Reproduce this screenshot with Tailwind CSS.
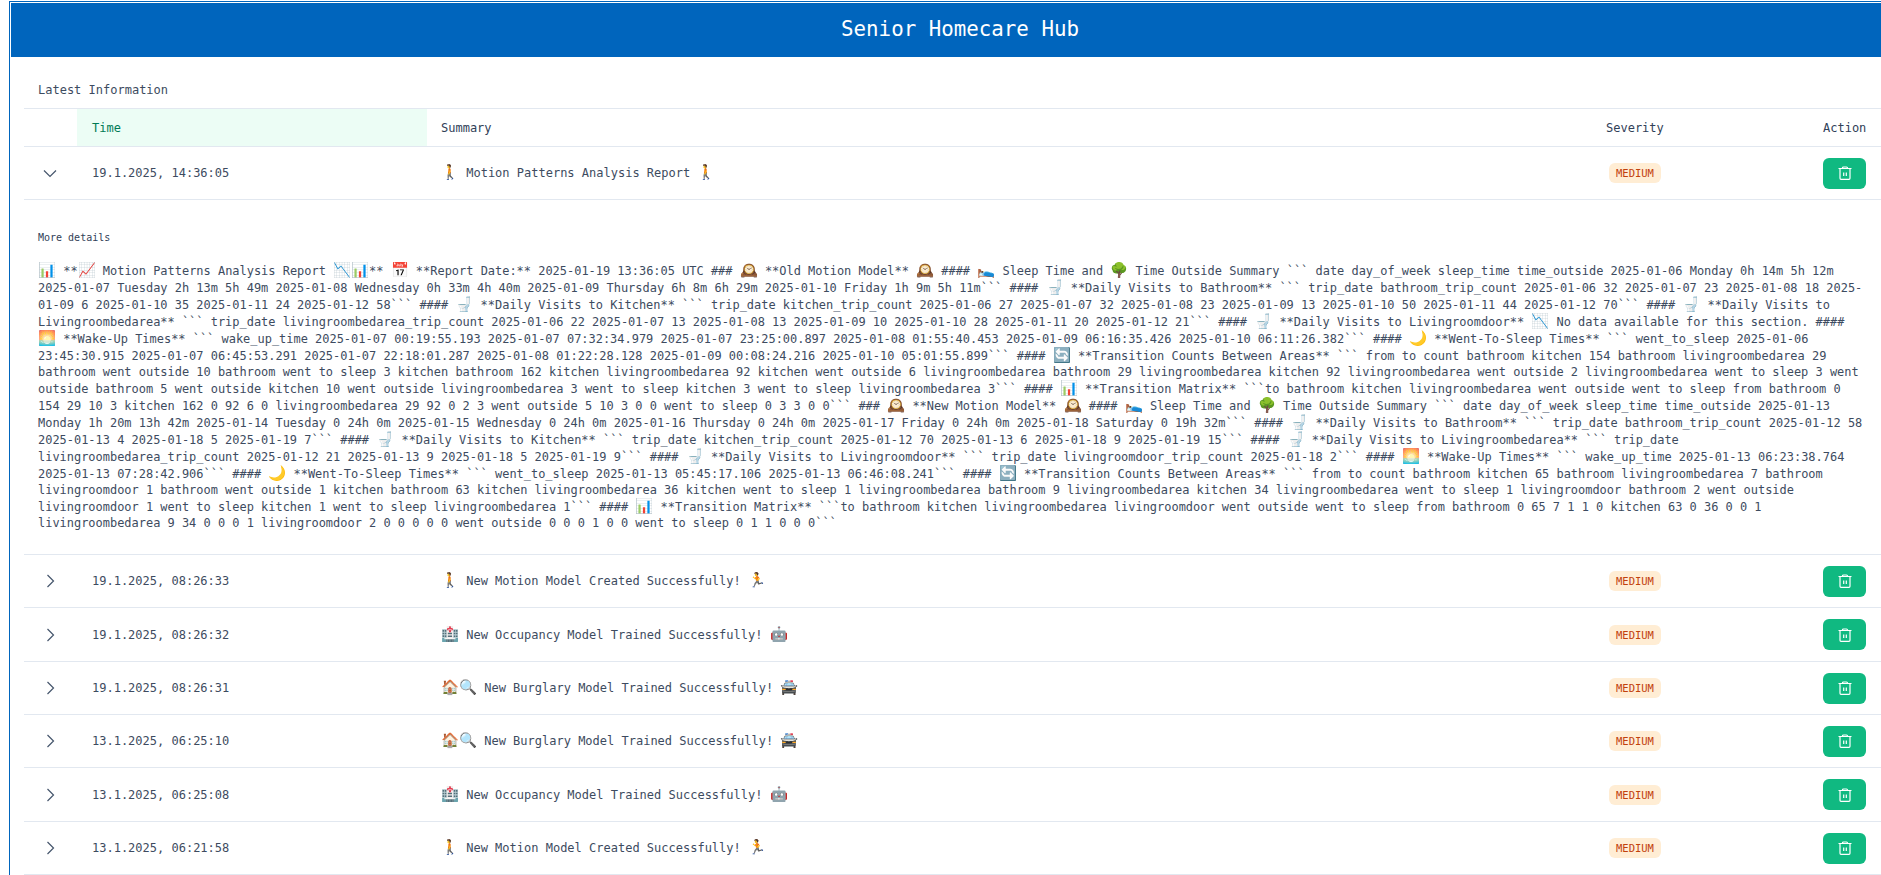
<!DOCTYPE html>
<html lang="en">
<head>
    <meta charset="UTF-8" />
    <meta name="viewport" content="width=device-width, initial-scale=1.0" />
    <title>Senior Homecare Hub</title>
    <script src="https://cdn.jsdelivr.net/npm/@tailwindcss/browser@4"></script>
</head>
<body class="bg-white text-[#3d4b60] font-['DejaVu_Sans_Mono',monospace] text-xs h-[875px] overflow-hidden">

<div class="ml-[9px] mt-px h-full border-l border-t border-[#0065bd] pt-px pl-px">

    <!-- Header -->
    <header class="h-[54px] bg-[#0065bd] text-white flex items-center justify-center pl-[28px] text-[20.8px]">
        Senior Homecare Hub
    </header>

    <main class="pl-[13px]">
        <h2 class="h-[51px] pl-[14px] pt-[25px] leading-4">Latest Information</h2>

        <table class="w-full table-fixed border-t border-slate-200">
            <thead>
                <tr class="h-[38px] border-b border-slate-200 text-left text-slate-700">
                    <th class="w-[53px]"></th>
                    <th class="w-[350px] px-[15px] font-medium bg-emerald-50 text-emerald-700">Time</th>
                    <th class="px-[14px] font-medium">Summary</th>
                    <th class="w-[217px] px-3 font-medium">Severity</th>
                    <th class="w-[70px] px-3 font-medium">Action</th>
                </tr>
            </thead>
            <tbody>
                <!-- Expanded row -->
                <tr class="h-[53px] border-b border-slate-200">
                    <td class="pl-[18px]">
                        <svg class="w-4 h-4 text-slate-600" fill="none" viewBox="0 0 16 16" stroke="currentColor" stroke-width="1.2"><path d="M2 5.5l6 6 6-6" /></svg>
                    </td>
                    <td class="px-[15px]">19.1.2025, 14:36:05</td>
                    <td class="px-[14px]"><span class="text-[14.5px]">🚶</span> Motion Patterns Analysis Report <span class="text-[14.5px]">🚶</span></td>
                    <td class="px-3"><span class="inline-block ml-[3px] h-5 px-[7px] rounded-md bg-orange-100 text-[#c2410c] text-[10.5px] leading-5">MEDIUM</span></td>
                    <td class="px-3">
                        <button class="w-[43px] h-[31px] rounded-md bg-[#10b981] text-white flex items-center justify-center">
                            <svg class="w-4 h-4" fill="none" viewBox="0 0 16 16" stroke="currentColor" stroke-width="1.2"><path d="M1.5 3.5h13M5.5 3.5V3a1 1 0 0 1 1-1h3a1 1 0 0 1 1 1v.5M3 3.5v9.8a1 1 0 0 0 1 1h8a1 1 0 0 0 1-1V3.5M6.7 7.5v3.5M9.3 7.5v3.5" /></svg>
                        </button>
                    </td>
                </tr>
                <tr class="border-b border-slate-200">
                    <td colspan="5" class="pl-[14px] pr-[14px] pt-[31px] h-[355px] align-top">
                        <p class="text-[10px] leading-[14px] font-medium text-slate-700 mb-[17px]">More details</p>
                        <p class="text-[11.96px] leading-4 [&>span]:text-[14.5px]"><span>📊</span> **<span>📈</span> Motion Patterns Analysis Report <span>📉📊</span>** <span>📅</span> **Report Date:** 2025-01-19 13:36:05 UTC ### <span>🕰️</span> **Old Motion Model** <span>🕰️</span> #### <span>🛌</span> Sleep Time and <span>🌳</span> Time Outside Summary ``` date day_of_week sleep_time time_outside 2025-01-06 Monday 0h 14m 5h 12m 2025-01-07 Tuesday 2h 13m 5h 49m 2025-01-08 Wednesday 0h 33m 4h 40m 2025-01-09 Thursday 6h 8m 6h 29m 2025-01-10 Friday 1h 9m 5h 11m``` #### <span>🚽</span> **Daily Visits to Bathroom** ``` trip_date bathroom_trip_count 2025-01-06 32 2025-01-07 23 2025-01-08 18 2025-01-09 6 2025-01-10 35 2025-01-11 24 2025-01-12 58``` #### <span>🚽</span> **Daily Visits to Kitchen** ``` trip_date kitchen_trip_count 2025-01-06 27 2025-01-07 32 2025-01-08 23 2025-01-09 13 2025-01-10 50 2025-01-11 44 2025-01-12 70``` #### <span>🚽</span> **Daily Visits to Livingroombedarea** ``` trip_date livingroombedarea_trip_count 2025-01-06 22 2025-01-07 13 2025-01-08 13 2025-01-09 10 2025-01-10 28 2025-01-11 20 2025-01-12 21``` #### <span>🚽</span> **Daily Visits to Livingroomdoor** <span>📉</span> No data available for this section. #### <span>🌅</span> **Wake-Up Times** ``` wake_up_time 2025-01-07 00:19:55.193 2025-01-07 07:32:34.979 2025-01-07 23:25:00.897 2025-01-08 01:55:40.453 2025-01-09 06:16:35.426 2025-01-10 06:11:26.382``` #### <span>🌙</span> **Went-To-Sleep Times** ``` went_to_sleep 2025-01-06 23:45:30.915 2025-01-07 06:45:53.291 2025-01-07 22:18:01.287 2025-01-08 01:22:28.128 2025-01-09 00:08:24.216 2025-01-10 05:01:55.899``` #### <span>🔄</span> **Transition Counts Between Areas** ``` from to count bathroom kitchen 154 bathroom livingroombedarea 29 bathroom went outside 10 bathroom went to sleep 3 kitchen bathroom 162 kitchen livingroombedarea 92 kitchen went outside 6 livingroombedarea bathroom 29 livingroombedarea kitchen 92 livingroombedarea went outside 2 livingroombedarea went to sleep 3 went outside bathroom 5 went outside kitchen 10 went outside livingroombedarea 3 went to sleep kitchen 3 went to sleep livingroombedarea 3``` #### <span>📊</span> **Transition Matrix** ```to bathroom kitchen livingroombedarea went outside went to sleep from bathroom 0 154 29 10 3 kitchen 162 0 92 6 0 livingroombedarea 29 92 0 2 3 went outside 5 10 3 0 0 went to sleep 0 3 3 0 0``` ### <span>🕰️</span> **New Motion Model** <span>🕰️</span> #### <span>🛌</span> Sleep Time and <span>🌳</span> Time Outside Summary ``` date day_of_week sleep_time time_outside 2025-01-13 Monday 1h 20m 13h 42m 2025-01-14 Tuesday 0 24h 0m 2025-01-15 Wednesday 0 24h 0m 2025-01-16 Thursday 0 24h 0m 2025-01-17 Friday 0 24h 0m 2025-01-18 Saturday 0 19h 32m``` #### <span>🚽</span> **Daily Visits to Bathroom** ``` trip_date bathroom_trip_count 2025-01-12 58 2025-01-13 4 2025-01-18 5 2025-01-19 7``` #### <span>🚽</span> **Daily Visits to Kitchen** ``` trip_date kitchen_trip_count 2025-01-12 70 2025-01-13 6 2025-01-18 9 2025-01-19 15``` #### <span>🚽</span> **Daily Visits to Livingroombedarea** ``` trip_date livingroombedarea_trip_count 2025-01-12 21 2025-01-13 9 2025-01-18 5 2025-01-19 9``` #### <span>🚽</span> **Daily Visits to Livingroomdoor** ``` trip_date livingroomdoor_trip_count 2025-01-18 2``` #### <span>🌅</span> **Wake-Up Times** ``` wake_up_time 2025-01-13 06:23:38.764 2025-01-13 07:28:42.906``` #### <span>🌙</span> **Went-To-Sleep Times** ``` went_to_sleep 2025-01-13 05:45:17.106 2025-01-13 06:46:08.241``` #### <span>🔄</span> **Transition Counts Between Areas** ``` from to count bathroom kitchen 65 bathroom livingroombedarea 7 bathroom livingroomdoor 1 bathroom went outside 1 kitchen bathroom 63 kitchen livingroombedarea 36 kitchen went to sleep 1 livingroombedarea bathroom 9 livingroombedarea kitchen 34 livingroombedarea went to sleep 1 livingroomdoor bathroom 2 went outside livingroomdoor 1 went to sleep kitchen 1 went to sleep livingroombedarea 1``` #### <span>📊</span> **Transition Matrix** ```to bathroom kitchen livingroombedarea livingroomdoor went outside went to sleep from bathroom 0 65 7 1 1 0 kitchen 63 0 36 0 0 1 livingroombedarea 9 34 0 0 0 1 livingroomdoor 2 0 0 0 0 0 went outside 0 0 0 1 0 0 went to sleep 0 1 1 0 0 0```</p>
                    </td>
                </tr>
                <!-- Collapsed rows -->
                <tr class="h-[53px] border-b border-slate-200">
                    <td class="pl-[18px]"><svg class="w-4 h-4 text-slate-600" fill="none" viewBox="0 0 16 16" stroke="currentColor" stroke-width="1.2"><path d="M5.5 2l6 6-6 6" /></svg></td>
                    <td class="px-[15px]">19.1.2025, 08:26:33</td>
                    <td class="px-[14px]"><span class="text-[14.5px]">🚶</span> New Motion Model Created Successfully! <span class="text-[14.5px]">🏃</span></td>
                    <td class="px-3"><span class="inline-block ml-[3px] h-5 px-[7px] rounded-md bg-orange-100 text-[#c2410c] text-[10.5px] leading-5">MEDIUM</span></td>
                    <td class="px-3"><button class="w-[43px] h-[31px] rounded-md bg-[#10b981] text-white flex items-center justify-center"><svg class="w-4 h-4" fill="none" viewBox="0 0 16 16" stroke="currentColor" stroke-width="1.2"><path d="M1.5 3.5h13M5.5 3.5V3a1 1 0 0 1 1-1h3a1 1 0 0 1 1 1v.5M3 3.5v9.8a1 1 0 0 0 1 1h8a1 1 0 0 0 1-1V3.5M6.7 7.5v3.5M9.3 7.5v3.5" /></svg></button></td>
                </tr>
                <tr class="h-[54px] border-b border-slate-200">
                    <td class="pl-[18px]"><svg class="w-4 h-4 text-slate-600" fill="none" viewBox="0 0 16 16" stroke="currentColor" stroke-width="1.2"><path d="M5.5 2l6 6-6 6" /></svg></td>
                    <td class="px-[15px]">19.1.2025, 08:26:32</td>
                    <td class="px-[14px]"><span class="text-[14.5px]">🏥</span> New Occupancy Model Trained Successfully! <span class="text-[14.5px]">🤖</span></td>
                    <td class="px-3"><span class="inline-block ml-[3px] h-5 px-[7px] rounded-md bg-orange-100 text-[#c2410c] text-[10.5px] leading-5">MEDIUM</span></td>
                    <td class="px-3"><button class="w-[43px] h-[31px] rounded-md bg-[#10b981] text-white flex items-center justify-center"><svg class="w-4 h-4" fill="none" viewBox="0 0 16 16" stroke="currentColor" stroke-width="1.2"><path d="M1.5 3.5h13M5.5 3.5V3a1 1 0 0 1 1-1h3a1 1 0 0 1 1 1v.5M3 3.5v9.8a1 1 0 0 0 1 1h8a1 1 0 0 0 1-1V3.5M6.7 7.5v3.5M9.3 7.5v3.5" /></svg></button></td>
                </tr>
                <tr class="h-[53px] border-b border-slate-200">
                    <td class="pl-[18px]"><svg class="w-4 h-4 text-slate-600" fill="none" viewBox="0 0 16 16" stroke="currentColor" stroke-width="1.2"><path d="M5.5 2l6 6-6 6" /></svg></td>
                    <td class="px-[15px]">19.1.2025, 08:26:31</td>
                    <td class="px-[14px]"><span class="text-[14.5px]">🏠🔍</span> New Burglary Model Trained Successfully! <span class="text-[14.5px]">🚔</span></td>
                    <td class="px-3"><span class="inline-block ml-[3px] h-5 px-[7px] rounded-md bg-orange-100 text-[#c2410c] text-[10.5px] leading-5">MEDIUM</span></td>
                    <td class="px-3"><button class="w-[43px] h-[31px] rounded-md bg-[#10b981] text-white flex items-center justify-center"><svg class="w-4 h-4" fill="none" viewBox="0 0 16 16" stroke="currentColor" stroke-width="1.2"><path d="M1.5 3.5h13M5.5 3.5V3a1 1 0 0 1 1-1h3a1 1 0 0 1 1 1v.5M3 3.5v9.8a1 1 0 0 0 1 1h8a1 1 0 0 0 1-1V3.5M6.7 7.5v3.5M9.3 7.5v3.5" /></svg></button></td>
                </tr>
                <tr class="h-[53px] border-b border-slate-200">
                    <td class="pl-[18px]"><svg class="w-4 h-4 text-slate-600" fill="none" viewBox="0 0 16 16" stroke="currentColor" stroke-width="1.2"><path d="M5.5 2l6 6-6 6" /></svg></td>
                    <td class="px-[15px]">13.1.2025, 06:25:10</td>
                    <td class="px-[14px]"><span class="text-[14.5px]">🏠🔍</span> New Burglary Model Trained Successfully! <span class="text-[14.5px]">🚔</span></td>
                    <td class="px-3"><span class="inline-block ml-[3px] h-5 px-[7px] rounded-md bg-orange-100 text-[#c2410c] text-[10.5px] leading-5">MEDIUM</span></td>
                    <td class="px-3"><button class="w-[43px] h-[31px] rounded-md bg-[#10b981] text-white flex items-center justify-center"><svg class="w-4 h-4" fill="none" viewBox="0 0 16 16" stroke="currentColor" stroke-width="1.2"><path d="M1.5 3.5h13M5.5 3.5V3a1 1 0 0 1 1-1h3a1 1 0 0 1 1 1v.5M3 3.5v9.8a1 1 0 0 0 1 1h8a1 1 0 0 0 1-1V3.5M6.7 7.5v3.5M9.3 7.5v3.5" /></svg></button></td>
                </tr>
                <tr class="h-[54px] border-b border-slate-200">
                    <td class="pl-[18px]"><svg class="w-4 h-4 text-slate-600" fill="none" viewBox="0 0 16 16" stroke="currentColor" stroke-width="1.2"><path d="M5.5 2l6 6-6 6" /></svg></td>
                    <td class="px-[15px]">13.1.2025, 06:25:08</td>
                    <td class="px-[14px]"><span class="text-[14.5px]">🏥</span> New Occupancy Model Trained Successfully! <span class="text-[14.5px]">🤖</span></td>
                    <td class="px-3"><span class="inline-block ml-[3px] h-5 px-[7px] rounded-md bg-orange-100 text-[#c2410c] text-[10.5px] leading-5">MEDIUM</span></td>
                    <td class="px-3"><button class="w-[43px] h-[31px] rounded-md bg-[#10b981] text-white flex items-center justify-center"><svg class="w-4 h-4" fill="none" viewBox="0 0 16 16" stroke="currentColor" stroke-width="1.2"><path d="M1.5 3.5h13M5.5 3.5V3a1 1 0 0 1 1-1h3a1 1 0 0 1 1 1v.5M3 3.5v9.8a1 1 0 0 0 1 1h8a1 1 0 0 0 1-1V3.5M6.7 7.5v3.5M9.3 7.5v3.5" /></svg></button></td>
                </tr>
                <tr class="h-[53px] border-b border-slate-200">
                    <td class="pl-[18px]"><svg class="w-4 h-4 text-slate-600" fill="none" viewBox="0 0 16 16" stroke="currentColor" stroke-width="1.2"><path d="M5.5 2l6 6-6 6" /></svg></td>
                    <td class="px-[15px]">13.1.2025, 06:21:58</td>
                    <td class="px-[14px]"><span class="text-[14.5px]">🚶</span> New Motion Model Created Successfully! <span class="text-[14.5px]">🏃</span></td>
                    <td class="px-3"><span class="inline-block ml-[3px] h-5 px-[7px] rounded-md bg-orange-100 text-[#c2410c] text-[10.5px] leading-5">MEDIUM</span></td>
                    <td class="px-3"><button class="w-[43px] h-[31px] rounded-md bg-[#10b981] text-white flex items-center justify-center"><svg class="w-4 h-4" fill="none" viewBox="0 0 16 16" stroke="currentColor" stroke-width="1.2"><path d="M1.5 3.5h13M5.5 3.5V3a1 1 0 0 1 1-1h3a1 1 0 0 1 1 1v.5M3 3.5v9.8a1 1 0 0 0 1 1h8a1 1 0 0 0 1-1V3.5M6.7 7.5v3.5M9.3 7.5v3.5" /></svg></button></td>
                </tr>
            </tbody>
        </table>
    </main>
</div>

</body>
</html>
